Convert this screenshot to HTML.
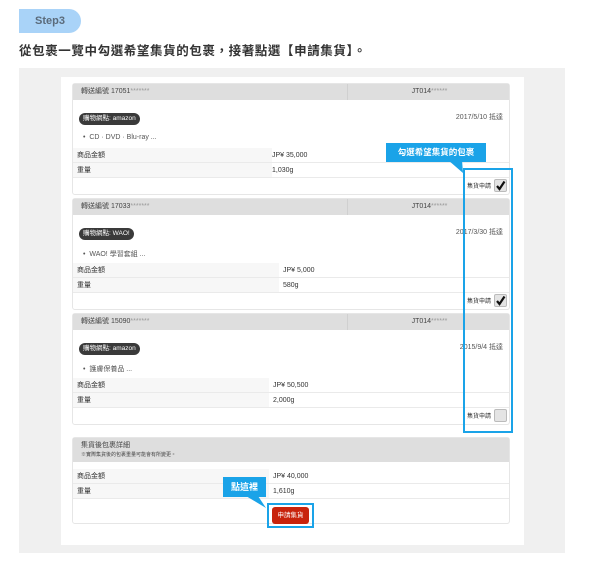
<!DOCTYPE html>
<html><head><meta charset="utf-8"><style>
*{margin:0;padding:0;box-sizing:border-box}
body{width:600px;height:564px;background:#fff;position:relative;font-family:"Liberation Sans","Noto Sans CJK TC",sans-serif;overflow:hidden}
.a{position:absolute}
.pill{left:19px;top:9px;width:62px;height:24px;background:#a9d3f8;border-radius:0 12px 12px 0;color:#5b6b7b;font-size:11px;font-weight:bold;line-height:24px;text-align:center}
.h{left:19px;top:40px;font-size:12.5px;font-weight:bold;color:#333;letter-spacing:0.6px}
.gray{left:19px;top:68px;width:546px;height:485px;background:#f0f0f0}
.white{left:61px;top:77px;width:463px;height:468px;background:#fff}
.card{left:72px;width:438px;border:1px solid #e6e6e6;border-radius:3px;background:#fff}
.hd{position:absolute;left:0;top:0;width:100%;height:16px;background:#dedede;font-size:7px;color:#444;line-height:16px;padding-left:8px}
.hd .r{position:absolute;left:274px;top:0;height:16px;border-left:1px solid #d0d0d0;width:164px;text-align:center;padding-left:0}
.badge{position:absolute;left:6px;height:12px;padding:0 4px;background:#3a3a3a;color:#fff;border-radius:6px;font-size:6.5px;line-height:12px}
.date{position:absolute;right:6px;font-size:7px;color:#555}
.bul{position:absolute;left:10px;font-size:7px;color:#555}
.row{position:absolute;left:0;width:100%;height:15px;border-bottom:1px solid #eaeaea;font-size:7px;line-height:15px;color:#333}
.row .l{position:absolute;left:0;top:0;height:14px;background:#f7f7f7;padding-left:4px}
.row .v{position:absolute;top:0}
.ft{position:absolute;right:2px;font-size:6px;color:#333;display:flex;align-items:center;gap:3px}
.cb{width:13px;height:13px;border:1px solid #bbb;background:#e4e4e4;border-radius:2px}
.blue{border:2px solid #1aa3e8}
.tip{background:#1aa3e8;color:#fff;font-weight:bold;text-align:center}
</style></head><body>
<div class="a pill">Step3</div>
<div class="a h">從包裹一覽中勾選希望集貨的包裹，接著點選【申請集貨】。</div>
<div class="a gray"></div>
<div class="a white"></div>

<div class="a card" style="top:83px;height:112px">
<div class="hd">轉送編號 17051<span style="color:#999">*******</span><div class="r">JT014<span style="color:#999">******</span></div></div>
<div class="badge" style="top:29px">購物網點: amazon</div>
<div class="date" style="top:28px">2017/5/10 抵達</div>
<div class="bul" style="top:50px">•&nbsp; CD · DVD · Blu-ray ...</div>
<div class="row" style="top:64px"><div class="l" style="width:199px">商品金額</div><div class="v" style="left:199px">JP¥ 35,000</div></div>
<div class="row" style="top:79px"><div class="l" style="width:199px">重量</div><div class="v" style="left:199px">1,030g</div></div>
<div class="ft" style="top:95px">集貨申請<div class="cb"><svg width="11" height="11"><path d="M2 6 L4.5 9 L9.5 1.5" stroke="#111" stroke-width="2.2" fill="none"/></svg></div></div>
</div>

<div class="a card" style="top:198px;height:112px">
<div class="hd">轉送編號 17033<span style="color:#999">*******</span><div class="r">JT014<span style="color:#999">******</span></div></div>
<div class="badge" style="top:29px">購物網點: WAO!</div>
<div class="date" style="top:28px">2017/3/30 抵達</div>
<div class="bul" style="top:50px">•&nbsp; WAO! 學習套組 ...</div>
<div class="row" style="top:64px"><div class="l" style="width:206px">商品金額</div><div class="v" style="left:210px">JP¥ 5,000</div></div>
<div class="row" style="top:79px"><div class="l" style="width:206px">重量</div><div class="v" style="left:210px">580g</div></div>
<div class="ft" style="top:95px">集貨申請<div class="cb"><svg width="11" height="11"><path d="M2 6 L4.5 9 L9.5 1.5" stroke="#111" stroke-width="2.2" fill="none"/></svg></div></div>
</div>

<div class="a card" style="top:313px;height:112px">
<div class="hd">轉送編號 15090<span style="color:#999">*******</span><div class="r">JT014<span style="color:#999">******</span></div></div>
<div class="badge" style="top:29px">購物網點: amazon</div>
<div class="date" style="top:28px">2015/9/4 抵達</div>
<div class="bul" style="top:50px">•&nbsp; 護膚保養品 ...</div>
<div class="row" style="top:64px"><div class="l" style="width:196px">商品金額</div><div class="v" style="left:200px">JP¥ 50,500</div></div>
<div class="row" style="top:79px"><div class="l" style="width:196px">重量</div><div class="v" style="left:200px">2,000g</div></div>
<div class="ft" style="top:95px">集貨申請<div class="cb"></div></div>
</div>

<div class="a card" style="top:437px;height:87px">
<div class="hd" style="height:24px;line-height:9px;padding-top:3px">集貨後包裹詳細<br><span style="font-size:5px">※實際集貨後的包裹重量可能會有所變更。</span></div>
<div class="row" style="top:31px"><div class="l" style="width:196px">商品金額</div><div class="v" style="left:200px">JP¥ 40,000</div></div>
<div class="row" style="top:46px"><div class="l" style="width:196px">重量</div><div class="v" style="left:200px">1,610g</div></div>
</div>

<div class="a blue" style="left:463px;top:168px;width:50px;height:265px"></div>
<div class="a tip" style="left:386px;top:143px;width:100px;height:19px;font-size:8.5px;line-height:19px">勾選希望集貨的包裹</div>
<svg class="a" style="left:440px;top:160px" width="30" height="15"><polygon points="8,0 22,0 23,13" fill="#1aa3e8"/></svg>

<div class="a blue" style="left:267px;top:503px;width:47px;height:25px"></div>
<div class="a" style="left:272px;top:507px;width:37px;height:17px;background:#c8230c;border-radius:3px;color:#fff;font-size:6.5px;line-height:17px;text-align:center">申請集貨</div>
<div class="a tip" style="left:223px;top:477px;width:43px;height:20px;font-size:9px;line-height:20px">點這裡</div>
<svg class="a" style="left:240px;top:496px" width="30" height="15"><polygon points="6,0 18,0 26,12" fill="#1aa3e8"/></svg>
</body></html>
